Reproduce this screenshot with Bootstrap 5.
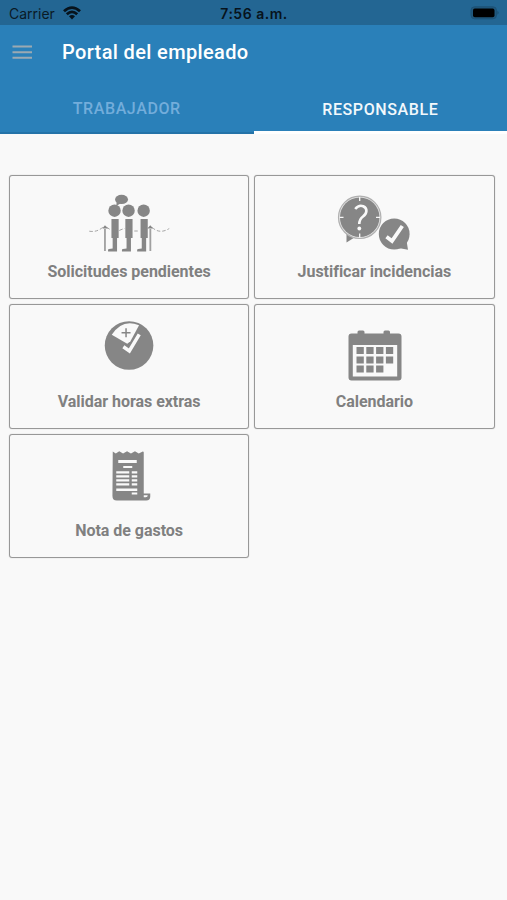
<!DOCTYPE html>
<html lang="es">
<head>
<meta charset="utf-8">
<meta name="viewport" content="width=device-width, initial-scale=1">
<title>Portal del empleado</title>
<link href="https://cdn.jsdelivr.net/npm/bootstrap@5.3.0/dist/css/bootstrap.min.css" rel="stylesheet">
<style>
body{background:#f9f9f9;font-family:Roboto,"Liberation Sans",sans-serif;min-height:900px;overflow:hidden}
.status-bar{height:25px;background:#236693;color:#0a1a26;font-family:Inter,sans-serif;font-size:14px;line-height:25px;padding:1px 8px 0 9px}
.status-bar .side{flex:1 1 0}
.clock{font-weight:600;letter-spacing:.5px;color:#07131c}
.carrier{letter-spacing:0}
.app-header{background:#2a80b9;height:109px}
.title-bar{height:53px;padding-left:12px}
.title-text{font-size:20px;font-weight:500;margin:0 0 0 29px;line-height:52px;letter-spacing:.36px}
.portal-tabs{height:56px}
.portal-tabs .nav-link{color:#73addb;font-size:16px;font-weight:500;line-height:20px;letter-spacing:.6px;padding:21px 0 0;height:56px;border-bottom:2px solid #2473a8;border-radius:0}
.portal-tabs .nav-link.active{color:#f2f8fc;background:none;border-bottom:3px solid #fff;padding-top:22px}
.tiles{padding:40.5px 12.5px 0 9px;display:grid;grid-template-columns:1fr 1fr;gap:5px}
.tile{height:124.5px;border:1px solid #989898;box-shadow:0 0 1px #a8a8a8;border-radius:3px;background:#f9f9f9;color:#808080;padding-top:10px}
.tile svg{width:100px;height:66px;fill:#868686}
.tile-label{font-size:16px;font-weight:700;line-height:20px;margin-top:10.5px;letter-spacing:-.03px}
</style>
</head>
<body>
<div class="status-bar d-flex align-items-center">
  <div class="side d-flex align-items-center"><span class="carrier">Carrier</span>
    <svg class="ms-2" width="18" height="14" viewBox="0 0 18 14" fill="none" stroke="#07131c" stroke-width="2.8"><path d="M1 5.2Q9-2 17 5.2M3.8 8.3Q9 3.5 14.2 8.3"/><path d="M6 10.3Q9 7.8 12 10.3L9 13.4Z" fill="#07131c" stroke="none"/></svg>
  </div>
  <span class="clock">7:56 a.m.</span>
  <div class="side d-flex justify-content-end">
    <svg width="30" height="14" viewBox="0 0 30 14"><rect x="2" y=".8" width="25.5" height="12" rx="3.6" fill="#20587d" stroke="#1d5276"/><rect x="4" y="2.6" width="21.5" height="8.6" rx="1.8" fill="#000"/><path d="M28.500 4.800q2 2 0 4z" fill="#184867"/></svg>
  </div>
</div>
<header class="app-header">
  <div class="title-bar d-flex align-items-center text-white">
    <svg width="21" height="16" viewBox="0 0 21 16" stroke="#9ba9b2" stroke-width="1.9"><path d="M.5 2.500H20M.5 8.200H20M.5 13.800H20"/></svg>
    <h1 class="title-text">Portal del empleado</h1>
  </div>
  <nav class="nav nav-justified portal-tabs">
    <a class="nav-link" href="#">TRABAJADOR</a>
    <a class="nav-link active" href="#">RESPONSABLE</a>
  </nav>
</header>
<main class="tiles text-center">
  <div class="tile d-flex flex-column align-items-center">
    <svg viewBox="79.25 186 100 66">
      <ellipse cx="121.8" cy="199.4" rx="6.5" ry="4.6"/><path d="M117 201l-.5 5 5-3z"/>
      <circle cx="114.8" cy="210.7" r="6.2"/><circle cx="128.8" cy="210.7" r="6.2"/><circle cx="143.9" cy="210.7" r="6.2"/>
      <path id="person" d="M111.700 219h7.200v19h-1.600v13.500h-9v-1.600q0-.8 1-.8l3.600-.7V238h-1.200z"/>
      <use href="#person" x="13.9"/><use href="#person" x="29.1"/>
      <path d="M105.200 251v-22M150.600 251v-22" fill="none" stroke="#a0a0a0" stroke-width="1.8"/>
      <path d="M102.600 228.500l2.600-3.300 3.200 3.300zM147.600 228.500l2.900-3.300 3 3.300z"/>
      <path d="M89.500 231.200Q97 232.500 103 227.300M107 227.300l3 2M119.500 230.500Q122.500 229 125 228.500M134.500 231h4M152.500 227.500Q160 234.500 169.500 228.500" fill="none" stroke="#9b9b9b" stroke-width=".9" stroke-dasharray="3.5 2"/>
    </svg>
    <div class="tile-label">Solicitudes pendientes</div>
  </div>
  <div class="tile d-flex flex-column align-items-center">
    <svg viewBox="324.5 186 100 66">
      <path d="M347 233v9.500l8-5z"/>
      <circle cx="360.2" cy="217.3" r="21.2" stroke="#b0b0b0" stroke-width="1.2" fill="#e4e4e4"/><circle cx="360.2" cy="217.3" r="19.8"/>
      <path d="M360.200 197v4M360.200 233.500v4M340 217.300h4M376.500 217.300h4" stroke="#f9f9f9" stroke-width="1.3"/>
      <path d="M355.700 209Q359.500 204.500 363.700 206.300C368.500 208.500 367.500 213.500 363.500 216.500Q359.800 219.300 359.800 224" fill="none" stroke="#f9f9f9" stroke-width="2.6"/><circle cx="359.8" cy="228.5" r="1.9" fill="#f9f9f9"/>
      <circle cx="394.7" cy="234" r="15.4"/><path d="M399 248l9.500 1.700-1.600-10z"/>
      <path d="M387 236.800l5.500 4.200L402.800 226" fill="none" stroke="#f9f9f9" stroke-width="3.8"/>
    </svg>
    <div class="tile-label">Justificar incidencias</div>
  </div>
  <div class="tile d-flex flex-column align-items-center">
    <svg viewBox="79.25 315.5 100 66">
      <circle cx="129.3" cy="346" r="24.3"/>
      <path d="M112 335.300Q122.500 318.800 139.300 325.700L130.700 341.700 127.500 344.300z" fill="#f9f9f9"/>
      <path d="M126.300 328.800v9M121.800 333.300h9" stroke="#868686" stroke-width="1.5"/>
      <path d="M123.800 347.300l5.800 3.900L140 333.800" fill="none" stroke="#868686" stroke-width="6"/>
      <path d="M123.600 347.300l6 4.200L139.500 334.800" fill="none" stroke="#f9f9f9" stroke-width="3.5"/>
    </svg>
    <div class="tile-label">Validar horas extras</div>
  </div>
  <div class="tile d-flex flex-column align-items-center">
    <svg viewBox="324.5 315.5 100 66">
      <path d="M358 334v-1.500q0-1.500 1.500-1.500h4q1.500 0 1.500 1.500v1.500h19v-1.500q0-1.500 1.500-1.500h3.500q1.500 0 1.500 1.500v1.500h8.500q3 0 3 3v41q0 3-3 3h-47q-3 0-3-3v-41q0-3 3-3zM353.300 345.500v31.500h44.400v-31.500z" fill-rule="evenodd"/>
      <path d="M357 347.500h7.300v7H357zM366.800 347.500h7.300v7h-7.300zM376.600 347.500h7.300v7h-7.300zM386.400 347.500h7.300v7h-7.300zM357 357h7.300v7H357zM366.800 357h7.300v7h-7.300zM376.600 357h7.300v7h-7.300zM386.400 357h7.300v7h-7.300zM357 366h7.300v7H357zM366.800 366h7.300v7h-7.300zM376.600 366h7.300v7h-7.300z"/>
    </svg>
    <div class="tile-label">Calendario</div>
  </div>
  <div class="tile d-flex flex-column align-items-center">
    <svg viewBox="79.25 445 100 66">
      <path d="M113 451.500l3 2 3.500-2.300 3.800 2.300 4-2.300 3.900 2.300 4-2.300 3.800 2.300 4-2q1 0 1 1V493.500h6.500v3q0 4-4 4H117q-4.300 0-4.300-4.500z"/>
      <path d="M118.500 460h18.500v3H118.500zM123.500 466h9v2h-9zM116.500 471.300h13v2.300h-13zM132 471.300h5.500v2.300H132zM116.500 475.300h13v2.300h-13zM132 475.300h5.500v2.300H132zM116.500 479.300h13v2.300h-13zM132 479.300h5.500v2.300H132zM116.500 483.300h13v2.300h-13zM132 483.300h5.500v2.300H132zM116.500 488.500h21v2.500h-21zM132 492.500h5.500v2H132zM144 495.300h4q0 2-2 2h-2z" fill="#f9f9f9"/>
    </svg>
    <div class="tile-label">Nota de gastos</div>
  </div>
</main>
<script src="https://cdn.jsdelivr.net/npm/bootstrap@5.3.0/dist/js/bootstrap.bundle.min.js"></script>
</body>
</html>
